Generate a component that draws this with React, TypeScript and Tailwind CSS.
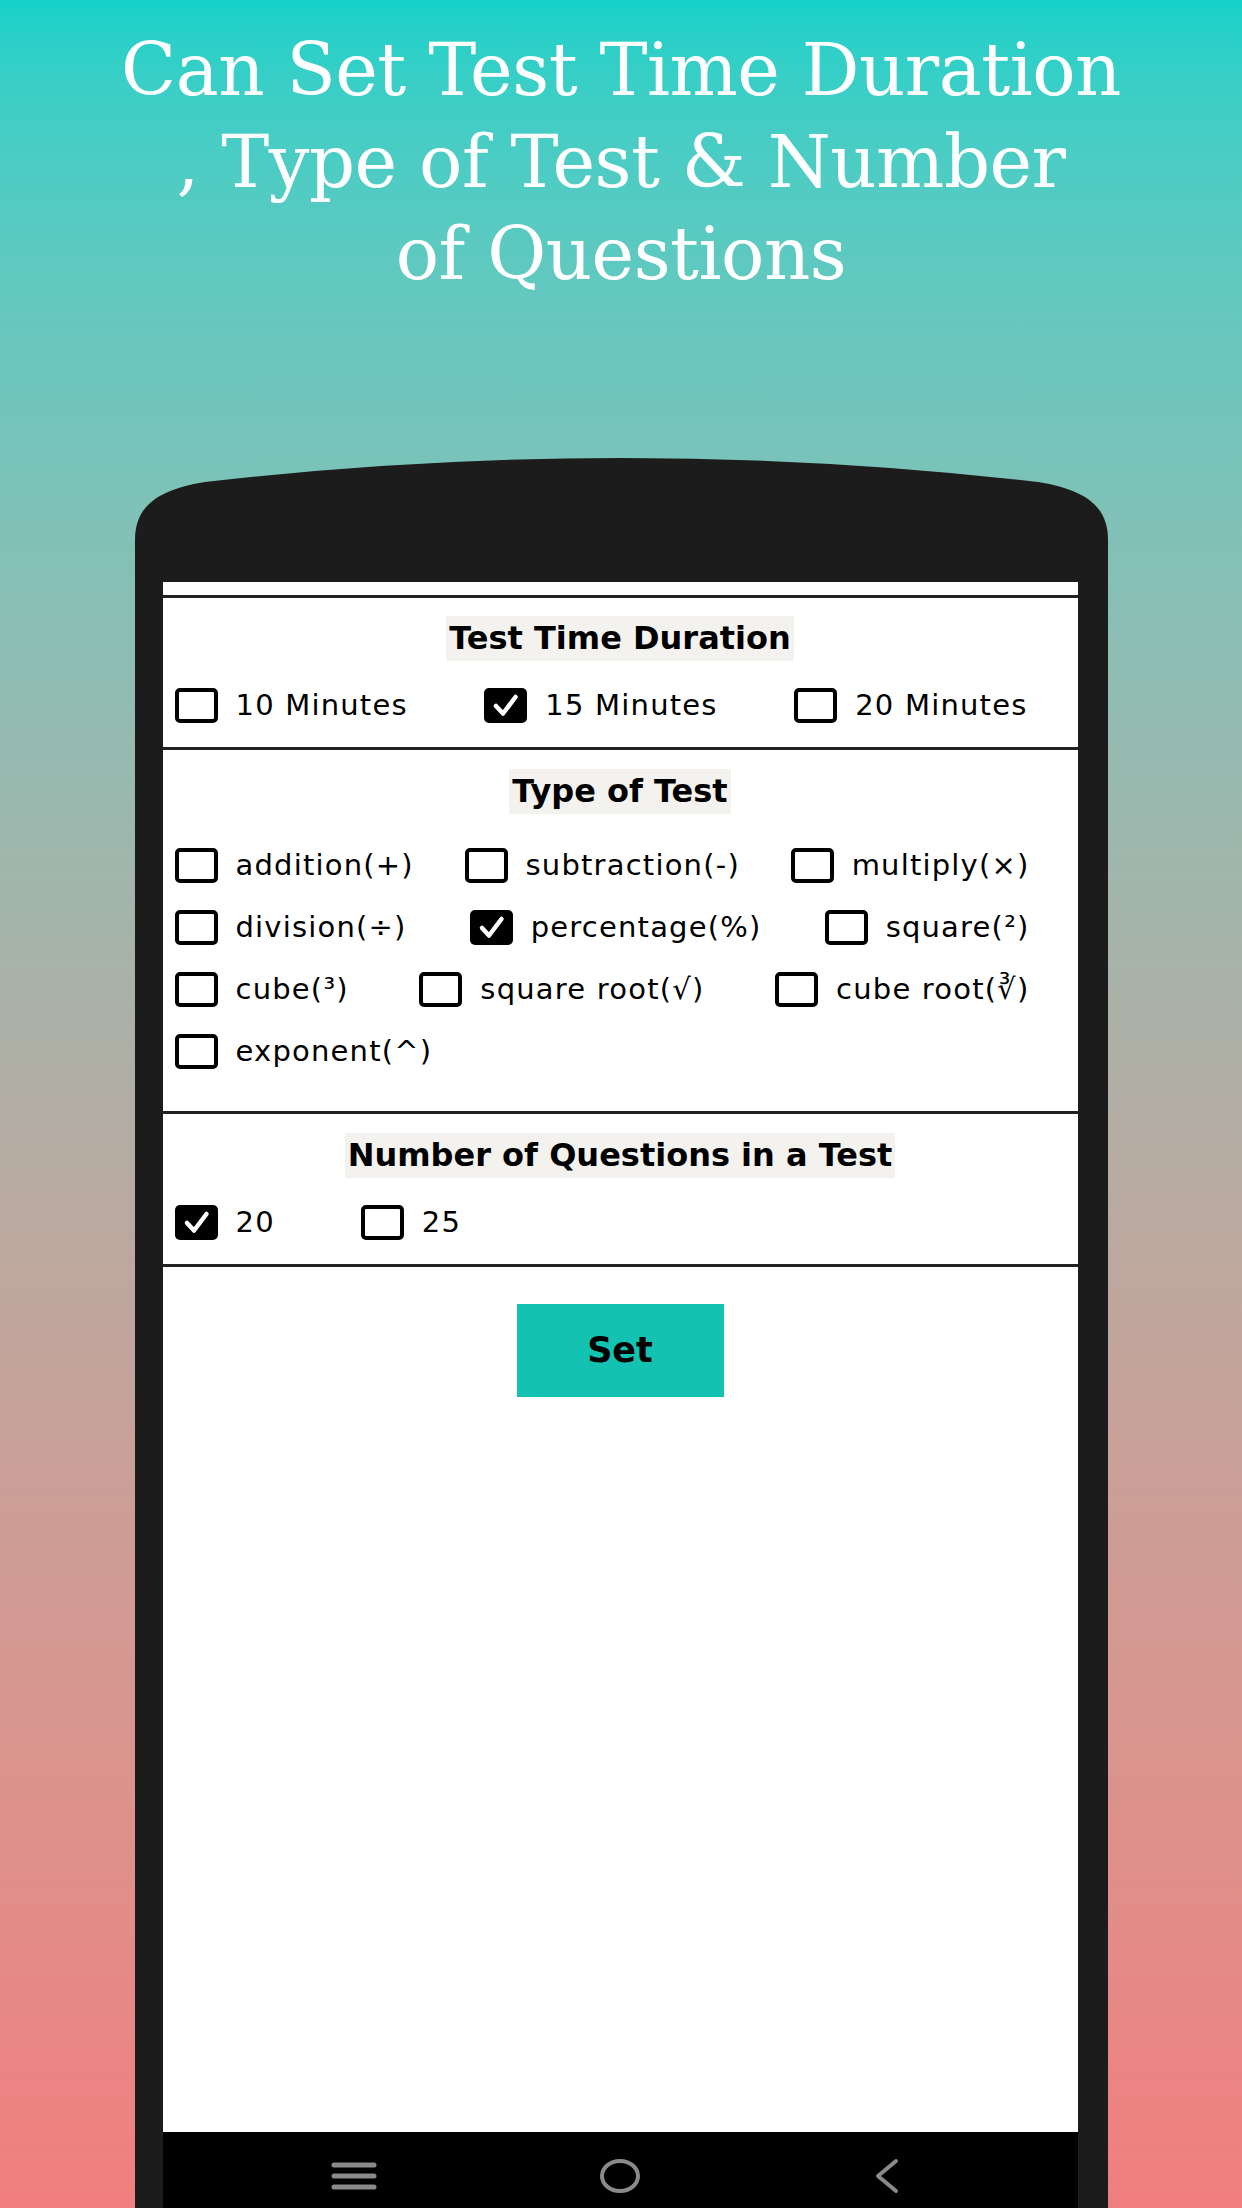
import React from 'react';

const sans = { fontFamily: '"DejaVu Sans", Roboto, sans-serif' };

const CheckBox = ({ checked }: { checked?: boolean }) =>
  checked ? (
    <span className="w-[43px] h-[35px] rounded-[5px] bg-black flex items-center justify-center shrink-0">
      <svg width="43" height="35" viewBox="0 0 43 35">
        <path d="M12 18 L19 25.5 L31.5 9" fill="none" stroke="white" strokeWidth="4.5" strokeLinecap="round" strokeLinejoin="round" />
      </svg>
    </span>
  ) : (
    <span className="w-[43px] h-[35px] rounded-[5px] border-[4.5px] border-black shrink-0" />
  );

const Option = ({ label, checked }: { label: string; checked?: boolean }) => (
  <div className="flex items-center gap-[18px] h-[35px]">
    <CheckBox checked={checked} />
    <span className="text-[29px] leading-none text-black tracking-[1.2px]">{label}</span>
  </div>
);

const Header = ({ title }: { title: string }) => (
  <div className="flex justify-center">
    <span className="bg-[#f4f2ee] px-[3px] h-[45px] leading-[45px] text-[32px] font-bold text-black">{title}</span>
  </div>
);

const typeRows: { label: string; checked?: boolean }[][] = [
  [{ label: 'addition(+)' }, { label: 'subtraction(-)' }, { label: 'multiply(×)' }],
  [{ label: 'division(÷)' }, { label: 'percentage(%)', checked: true }, { label: 'square(²)' }],
  [{ label: 'cube(³)' }, { label: 'square root(√)' }, { label: 'cube root(∛)' }],
];

export default function App() {
  return (
    <div className="w-[1242px] h-[2208px] overflow-hidden bg-gradient-to-b from-[#15d1c9] to-[#f17e7e] flex flex-col items-center">
      {/* headline */}
      <h1
        className="pt-[24px] text-center text-white text-[72px] leading-[92px] tracking-[-0.5px]"
        style={{ fontFamily: '"DejaVu Serif", "Liberation Serif", serif' }}
      >
        Can Set Test Time Duration
        <br />
        , Type of Test &amp; Number
        <br />
        of Questions
      </h1>

      {/* phone */}
      <div className="mt-[158px] w-[973px] flex flex-col shrink-0">
        <svg width="973" height="124" viewBox="0 0 973 124" className="block">
          <path d="M0 124 L0 82 C0 50 20 32 70 24 Q486.5 -24 903 24 C953 32 973 50 973 82 L973 124 Z" fill="#1c1c1c" />
        </svg>
        <div className="bg-[#1c1c1c] pl-[28px] pr-[30px] flex flex-col">
          <div className="bg-white h-[1550px] pt-[13px] flex flex-col" style={sans}>
            {/* duration */}
            <div className="border-t-[3px] border-b-[3px] border-[#222] pt-[18px] pb-[24px]">
              <Header title="Test Time Duration" />
              <div className="mt-[27px] pl-[12px] pr-[50px] flex justify-between">
                <Option label="10 Minutes" />
                <Option label="15 Minutes" checked />
                <Option label="20 Minutes" />
              </div>
            </div>

            {/* type */}
            <div className="border-b-[3px] border-[#222] pt-[19px] pb-[42px]">
              <Header title="Type of Test" />
              <div className="mt-[34px] flex flex-col gap-[27px] pl-[12px] pr-[48px]">
                {typeRows.map((row, i) => (
                  <div key={i} className="flex justify-between">
                    {row.map((o) => (
                      <Option key={o.label} label={o.label} checked={o.checked} />
                    ))}
                  </div>
                ))}
                <div className="flex">
                  <Option label="exponent(^)" />
                </div>
              </div>
            </div>

            {/* number of questions */}
            <div className="border-b-[3px] border-[#222] pt-[19px] pb-[24px]">
              <Header title="Number of Questions in a Test" />
              <div className="mt-[27px] pl-[12px] flex gap-[86px]">
                <Option label="20" checked />
                <Option label="25" />
              </div>
            </div>

            <div className="mt-[37px] flex justify-center">
              <button className="w-[207px] h-[93px] bg-[#13c2b1] text-black text-[35px] font-bold">Set</button>
            </div>
          </div>

          {/* nav bar */}
          <div className="bg-black h-[88px] flex items-center justify-center gap-[210px]">
            <svg width="56" height="40" viewBox="0 0 56 40">
              <g stroke="#8a8a8a" strokeWidth="5" strokeLinecap="round">
                <line x1="8" y1="9" x2="48" y2="9" />
                <line x1="8" y1="20" x2="48" y2="20" />
                <line x1="8" y1="31" x2="48" y2="31" />
              </g>
            </svg>
            <svg width="56" height="40" viewBox="0 0 56 40">
              <ellipse cx="28" cy="20" rx="18" ry="15" fill="none" stroke="#8a8a8a" strokeWidth="4" />
            </svg>
            <svg width="56" height="40" viewBox="0 0 56 40">
              <path d="M38 5 L20 20 L38 35" fill="none" stroke="#8a8a8a" strokeWidth="4" strokeLinecap="round" strokeLinejoin="round" />
            </svg>
          </div>
        </div>
      </div>
    </div>
  );
}
